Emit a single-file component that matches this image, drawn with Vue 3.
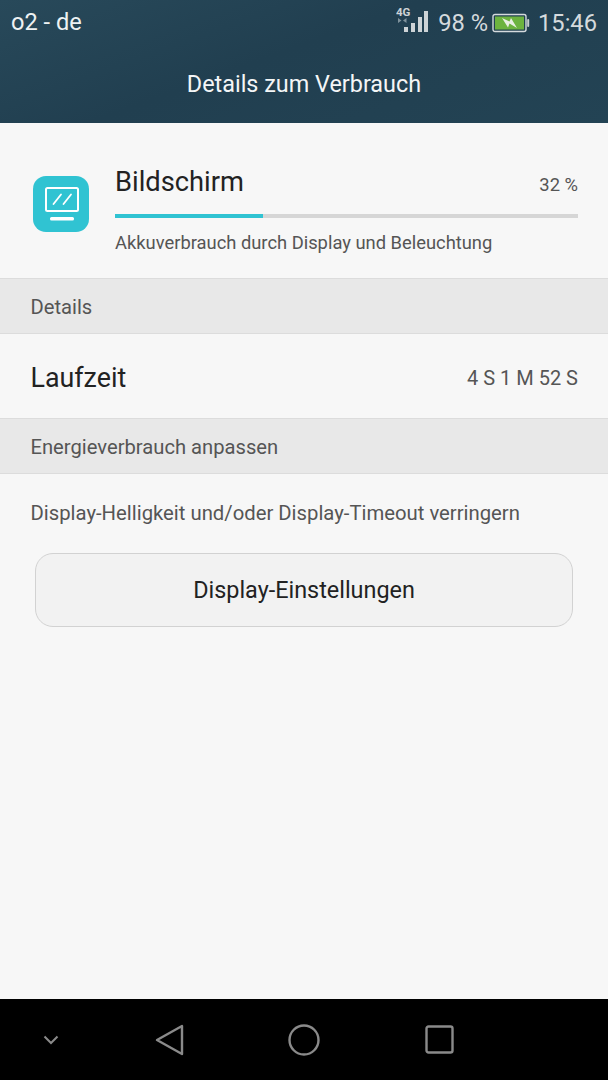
<template>
  <div class="phone">
    <header class="top-bar">
      <div class="status-bar">
        <span class="carrier">o2 - de</span>
        <div class="status-right">
          <svg class="signal" width="34" height="34" viewBox="0 0 34 34">
            <text x="0" y="10" class="net-label">4G</text>
            <path d="M5.500 14.500l-3.500-2.500v5zM7 14.500l3.500-2.500v5z" fill="#7f929c" />
            <rect x="8" y="21" width="4" height="5" fill="#cdd3d6" />
            <rect x="15" y="17" width="4" height="9" fill="#cdd3d6" />
            <rect x="22" y="11" width="4" height="15" fill="#cdd3d6" />
            <rect x="28" y="5" width="4" height="21" fill="#cdd3d6" />
          </svg>
          <span class="percent">98 %</span>
          <svg class="battery" width="38" height="20" viewBox="0 0 38 20">
            <rect x="1" y="1.500" width="33" height="17" rx="2" fill="none" stroke="#d5dadd" stroke-width="1.400" />
            <rect x="3" y="3.500" width="29" height="13" fill="#6cb33f" />
            <rect x="35.200" y="6" width="2" height="8" rx="1" fill="#c5cccf" />
            <path d="M10 5l7.500 3.500 1.500-3.500 6 10-7.500-4.500-1.500 4z" fill="#e8efe2" />
          </svg>
          <span class="clock">15:46</span>
        </div>
      </div>
      <h1 class="page-title">Details zum Verbrauch</h1>
    </header>

    <main class="content">
      <section class="summary">
        <div class="app-icon">
          <svg width="56" height="56" viewBox="0 0 56 56">
            <rect width="56" height="56" rx="13" fill="#30c3d2" />
            <rect x="13" y="12" width="32" height="23" rx="1.500" fill="none" stroke="#fff" stroke-width="2" />
            <path d="M20.500 28l7.500-9.500M30.500 28l7.500-9.500" stroke="#fff" stroke-width="1.800" stroke-linecap="round" />
            <rect x="17" y="41" width="24" height="3.500" rx="1.500" fill="#fff" />
          </svg>
        </div>
        <div class="summary-body">
          <div class="summary-head">
            <span class="summary-name">Bildschirm</span>
            <span class="summary-value">32 %</span>
          </div>
          <div class="bar"><div class="bar-fill" :style="{ width: usage + '%' }"></div></div>
          <div class="summary-note">Akkuverbrauch durch Display und Beleuchtung</div>
        </div>
      </section>

      <div class="section-label">Details</div>
      <div class="runtime-row">
        <span class="runtime-name">Laufzeit</span>
        <span class="runtime-value">4 S 1 M 52 S</span>
      </div>
      <div class="section-label">Energieverbrauch anpassen</div>
      <p class="hint">Display-Helligkeit und/oder Display-Timeout verringern</p>
      <button class="action">Display-Einstellungen</button>
    </main>

    <nav class="nav-bar">
      <svg class="nav-chevron" width="18" height="12" viewBox="0 0 18 12">
        <path d="M2.500 2.500L9 9l6.500-6.500" fill="none" stroke="#8a8a8a" stroke-width="2" />
      </svg>
      <svg class="nav-back" width="30" height="32" viewBox="0 0 30 32">
        <path d="M2 16L27 2v28z" fill="none" stroke="#8a8a8a" stroke-width="2.400" stroke-linejoin="round" />
      </svg>
      <svg class="nav-home" width="32" height="32" viewBox="0 0 32 32">
        <circle cx="16" cy="16" r="14.500" fill="none" stroke="#8a8a8a" stroke-width="2.400" />
      </svg>
      <svg class="nav-recent" width="29" height="29" viewBox="0 0 29 29">
        <rect x="1.500" y="1.500" width="26" height="26" rx="2" fill="none" stroke="#8a8a8a" stroke-width="2.400" />
      </svg>
    </nav>
  </div>
</template>

<script setup>
const usage = 32
</script>

<style>
body {
  margin: 0;
  background: #f7f7f7;
}
</style>

<style scoped>
* {
  box-sizing: border-box;
}

.phone {
  width: 608px;
  height: 1080px;
  display: flex;
  flex-direction: column;
  background: #f7f7f7;
  font-family: Roboto, "Liberation Sans", sans-serif;
  overflow: hidden;
}

.top-bar {
  height: 123px;
  background: linear-gradient(160deg, #28495a 0%, #213f50 45%, #234354 100%);
  color: #fff;
}

.status-bar {
  height: 44px;
  padding: 0 11px 0 11px;
  display: flex;
  align-items: center;
  justify-content: space-between;
}

.carrier {
  font-size: 23.600px;
  color: #eef2f3;
}

.status-right {
  display: flex;
  align-items: center;
  color: #d5dadd;
  font-size: 23.700px;
  padding-top: 2px;
}

.signal {
  margin-right: 8px;
}

.net-label {
  font-size: 11.500px;
  font-weight: 700;
  fill: #cdd3d6;
  font-family: Roboto, sans-serif;
}

.percent {
  margin-right: 4px;
}

.battery {
  margin-right: 8px;
}

.page-title {
  margin: 0;
  padding-top: 23px;
  text-align: center;
  font-size: 23.400px;
  line-height: 34px;
  font-weight: 400;
  color: #f4f6f7;
}

.content {
  flex: 1;
}

.summary {
  height: 155px;
  padding: 41px 30px 0 33px;
  display: flex;
  align-items: flex-start;
}

.app-icon {
  width: 56px;
  height: 56px;
  margin: 12px 26px 0 0;
  flex: none;
}

.summary-body {
  flex: 1;
}

.summary-head {
  display: flex;
  justify-content: space-between;
  align-items: baseline;
  height: 37px;
}

.summary-name {
  font-size: 27.300px;
  line-height: 37px;
  color: #222;
}

.summary-value {
  font-size: 18.400px;
  color: #555;
}

.bar {
  height: 4px;
  margin-top: 13px;
  background: #d6d6d6;
}

.bar-fill {
  height: 100%;
  background: #30c3d2;
}

.summary-note {
  margin-top: 12px;
  font-size: 18.350px;
  line-height: 26px;
  color: #555;
}

.section-label {
  height: 56px;
  padding: 2px 0 0 30.500px;
  display: flex;
  align-items: center;
  background: #e8e8e8;
  border-top: 1px solid #dcdcdc;
  border-bottom: 1px solid #dcdcdc;
  font-size: 20.200px;
  color: #555;
}

.runtime-row {
  height: 84px;
  padding: 3px 30px 0 30.500px;
  display: flex;
  align-items: center;
  justify-content: space-between;
}

.runtime-name {
  font-size: 26.800px;
  color: #222;
}

.runtime-value {
  font-size: 20px;
  color: #555;
}

.hint {
  margin: 0;
  padding: 26px 0 0 30.500px;
  font-size: 20.300px;
  line-height: 26px;
  color: #555;
}

.action {
  display: block;
  width: 538px;
  height: 74px;
  margin: 27px 0 0 35px;
  background: #f2f2f2;
  border: 1.500px solid #d2d2d2;
  border-radius: 18px;
  font-family: inherit;
  font-size: 23.400px;
  color: #222;
}

.nav-bar {
  height: 81px;
  background: #000;
  display: flex;
  align-items: center;
  padding-left: 42px;
}

.nav-chevron {
  margin-right: 95px;
}

.nav-back {
  margin-right: 103px;
}

.nav-home {
  margin-right: 105px;
}
</style>
